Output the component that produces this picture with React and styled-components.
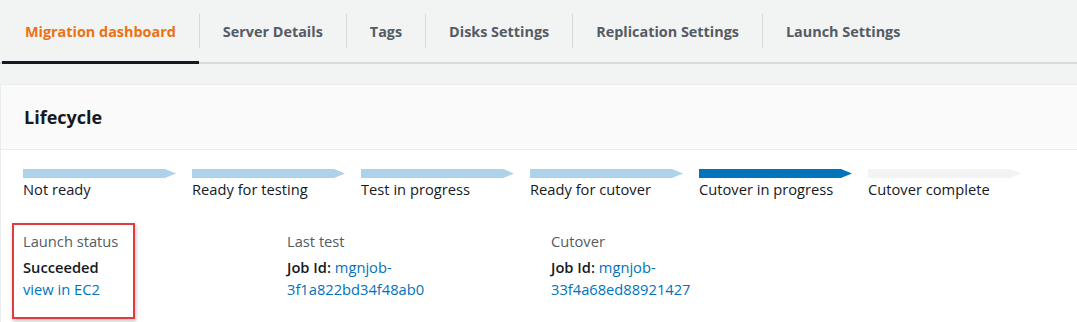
import styled, { createGlobalStyle } from "styled-components";

const GlobalStyle = createGlobalStyle`
  body {
    margin: 0;
    background-color: #f2f3f3;
    font-family: "Open Sans", "Noto Sans", Arial, sans-serif;
    color: #16191f;
  }
`;

const Page = styled.div`
  width: 1077px;
  height: 322px;
  overflow: hidden;
`;

const TabBar = styled.div`
  display: flex;
  align-items: center;
  height: 62px;
  padding-left: 2px;
  border-bottom: 2px solid #d5dbdb;
`;

const Tab = styled.div`
  display: flex;
  align-items: center;
  height: 100%;
  box-sizing: border-box;
  padding: 0 23px;
  font-size: 14.4px;
  font-weight: 700;
  color: ${(p) => (p.$active ? "#ec7211" : "#545b64")};
  border-bottom: ${(p) => (p.$active ? "3px solid #16191f" : "none")};
  margin-bottom: ${(p) => (p.$active ? "-3px" : "0")};
  padding-top: ${(p) => (p.$active ? "1px" : "0")};
`;

const Divider = styled.span`
  width: 1px;
  height: 34px;
  background-color: #d5dbdb;
`;

const Card = styled.section`
  margin-top: 20px;
  background-color: #ffffff;
  border: 1px solid #eaeded;
  border-right: none;
`;

const CardHeader = styled.header`
  display: flex;
  align-items: center;
  height: 64px;
  padding: 0 23px;
  background-color: #fafafa;
  border-bottom: 1px solid #eaeded;
`;

const Title = styled.h2`
  margin: 0;
  font-size: 18px;
  font-weight: 700;
  color: #16191f;
`;

const CardBody = styled.div`
  padding: 19px 22px 40px;
`;

const Steps = styled.div`
  display: grid;
  grid-template-columns: repeat(6, 153px);
  column-gap: 16px;
`;

const Step = styled.div`
  display: flex;
  flex-direction: column;
  gap: 1px;
`;

const Bar = styled.div`
  height: 9px;
  background-color: ${(p) =>
    p.$state === "current" ? "#0073bb" : p.$state === "todo" ? "#f2f3f3" : "#aed2ea"};
  clip-path: polygon(0 0, calc(100% - 11px) 0, 100% 50%, calc(100% - 11px) 100%, 0 100%);
`;

const StepLabel = styled.span`
  font-size: 14.7px;
  line-height: 20px;
  color: #16191f;
`;

const InfoRow = styled.div`
  display: grid;
  grid-template-columns: repeat(3, 264px);
  align-items: start;
  margin-top: 32px;
`;

const Column = styled.div`
  display: flex;
  flex-direction: column;
`;

const Highlight = styled(Column)`
  box-sizing: border-box;
  width: 123px;
  margin: -8px 0 0 -11px;
  padding: 6px 9px 17px;
  border: 2px solid #e03b3d;
  box-shadow: 1px 2px 4px rgba(0, 0, 0, 0.25);
`;

const Label = styled.span`
  font-size: 14.7px;
  line-height: 20px;
  color: #545b64;
  margin-bottom: 5px;
`;

const Value = styled.span`
  font-size: 14.7px;
  line-height: 22px;
  color: #16191f;
  font-weight: ${(p) => (p.$strong ? 600 : 400)};
`;

const Key = styled.b`
  font-weight: 600;
`;

const Link = styled.a`
  color: #0073bb;
  text-decoration: none;
  font-size: 14.7px;
  line-height: 22px;
`;

const tabs = [
  "Migration dashboard",
  "Server Details",
  "Tags",
  "Disks Settings",
  "Replication Settings",
  "Launch Settings",
];

const steps = [
  { label: "Not ready", state: "done" },
  { label: "Ready for testing", state: "done" },
  { label: "Test in progress", state: "done" },
  { label: "Ready for cutover", state: "done" },
  { label: "Cutover in progress", state: "current" },
  { label: "Cutover complete", state: "todo" },
];

export default function App() {
  return (
    <Page>
      <GlobalStyle />
      <TabBar>
        {tabs.map((t, i) => [
          i > 0 && <Divider key={t + "-d"} />,
          <Tab key={t} $active={i === 0}>
            {t}
          </Tab>,
        ])}
      </TabBar>

      <Card>
        <CardHeader>
          <Title>Lifecycle</Title>
        </CardHeader>
        <CardBody>
          <Steps>
            {steps.map((s) => (
              <Step key={s.label}>
                <Bar $state={s.state} />
                <StepLabel>{s.label}</StepLabel>
              </Step>
            ))}
          </Steps>

          <InfoRow>
            <Highlight>
              <Label>Launch status</Label>
              <Value $strong>Succeeded</Value>
              <Link href="#">view in EC2</Link>
            </Highlight>
            <Column>
              <Label>Last test</Label>
              <Value>
                <Key>Job Id:</Key> <Link href="#">mgnjob-</Link>
              </Value>
              <Link href="#">3f1a822bd34f48ab0</Link>
            </Column>
            <Column>
              <Label>Cutover</Label>
              <Value>
                <Key>Job Id:</Key> <Link href="#">mgnjob-</Link>
              </Value>
              <Link href="#">33f4a68ed88921427</Link>
            </Column>
          </InfoRow>
        </CardBody>
      </Card>
    </Page>
  );
}
